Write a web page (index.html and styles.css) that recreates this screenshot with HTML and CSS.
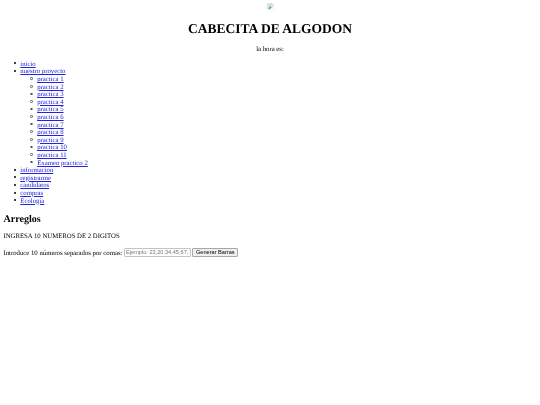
FILE: index.html

```html
<!DOCTYPE html>
<html lang="es">
<head>
    <meta charset="UTF-8">
    <title>Cabecita de Algodon</title>
    <link rel="stylesheet" href="styles.css">
</head>
<body>
    <div class="header">
        <svg class="broken-img" width="7" height="7" viewBox="0 0 16 16">
            <path d="M1.5 .5H10.5L14.5 4.5V15.5H1.5Z" fill="#fff" stroke="#a9a9a9"/>
            <path d="M10.5 .5V4.5H14.5" fill="#eee" stroke="#a9a9a9"/>
            <path d="M3 3H9V6H13V9L9 13H3Z" fill="#c3d5f5"/>
            <path d="M3 13L7 8L10 11L8 13Z" fill="#5d9b4c"/>
            <path d="M9 13L15 7V16H8Z" fill="#fff"/>
        </svg>
        <h1>CABECITA DE ALGODON</h1>
        <p>la hora es:</p>
    </div>
    <ul>
        <li><a href="#">inicio</a></li>
        <li><a href="#">nuestro proyecto</a>
            <ul>
                <li><a href="#">practica 1</a></li>
                <li><a href="#">practica 2</a></li>
                <li><a href="#">practica 3</a></li>
                <li><a href="#">practica 4</a></li>
                <li><a href="#">practica 5</a></li>
                <li><a href="#">practica 6</a></li>
                <li><a href="#">practica 7</a></li>
                <li><a href="#">practica 8</a></li>
                <li><a href="#">practica 9</a></li>
                <li><a href="#">practica 10</a></li>
                <li><a href="#">practica 11</a></li>
                <li><a href="#">Examen practico 2</a></li>
            </ul>
        </li>
        <li><a href="#">informacion</a></li>
        <li><a href="#">registrarme</a></li>
        <li><a href="#">candidatos</a></li>
        <li><a href="#">compras</a></li>
        <li><a href="#">Ecología</a></li>
    </ul>
    <h2>Arreglos</h2>
    <p>INGRESA 10 NUMEROS DE 2 DIGITOS</p>
    <form>
        <label for="numeros">Introduce 10 números separados por comas:</label>
        <input type="text" id="numeros" placeholder="Ejemplo: 23,20,34,45,67,...">
        <button type="button">Generar Barras</button>
    </form>
</body>
</html>
```

FILE: styles.css

```css
body {
    margin: 3.4px;
    font-family: "Liberation Serif", serif;
    font-size: 6.75px;
    line-height: 7.6px;
    text-rendering: geometricPrecision;
    filter: blur(0.25px);
}
a {
    color: #2222dd;
    text-decoration-thickness: 0.42px;
}
.header {
    text-align: center;
}
.broken-img {
    display: block;
    margin: 0 auto;
}
h1 {
    margin: 10.5px 0 10px;
    font-size: 13.5px;
    line-height: 15.6px;
}
h2 {
    margin: 8.4px 0;
    font-size: 10.1px;
    line-height: 11.6px;
}
p {
    margin: 6.75px 0;
}
ul {
    margin: 6.75px 0;
    padding-left: 16.9px;
    list-style: none;
}
ul ul {
    margin: 0;
}
li::before {
    content: "";
    display: inline-block;
    box-sizing: border-box;
    width: 2px;
    height: 2px;
    margin: 0 4.75px 1.4px -6.75px;
    border-radius: 50%;
    background: #000;
}
ul ul li::before {
    width: 2.6px;
    height: 2.6px;
    margin: 0 4.15px 1.1px -6.75px;
    border: 0.5px solid #555;
    background: none;
}
input, button {
    font-family: "Liberation Sans", sans-serif;
    font-size: 5.6px;
    box-sizing: border-box;
    vertical-align: baseline;
}
input {
    width: 66.5px;
    height: 9px;
    padding: 0 1px;
    border: 1px solid #c4c4c4;
    border-radius: 1px;
}
button {
    width: 46px;
    height: 9px;
    padding: 0;
    border: 1px solid #a8a8a8;
    border-radius: 1px;
    background: #efefef;
}
```
